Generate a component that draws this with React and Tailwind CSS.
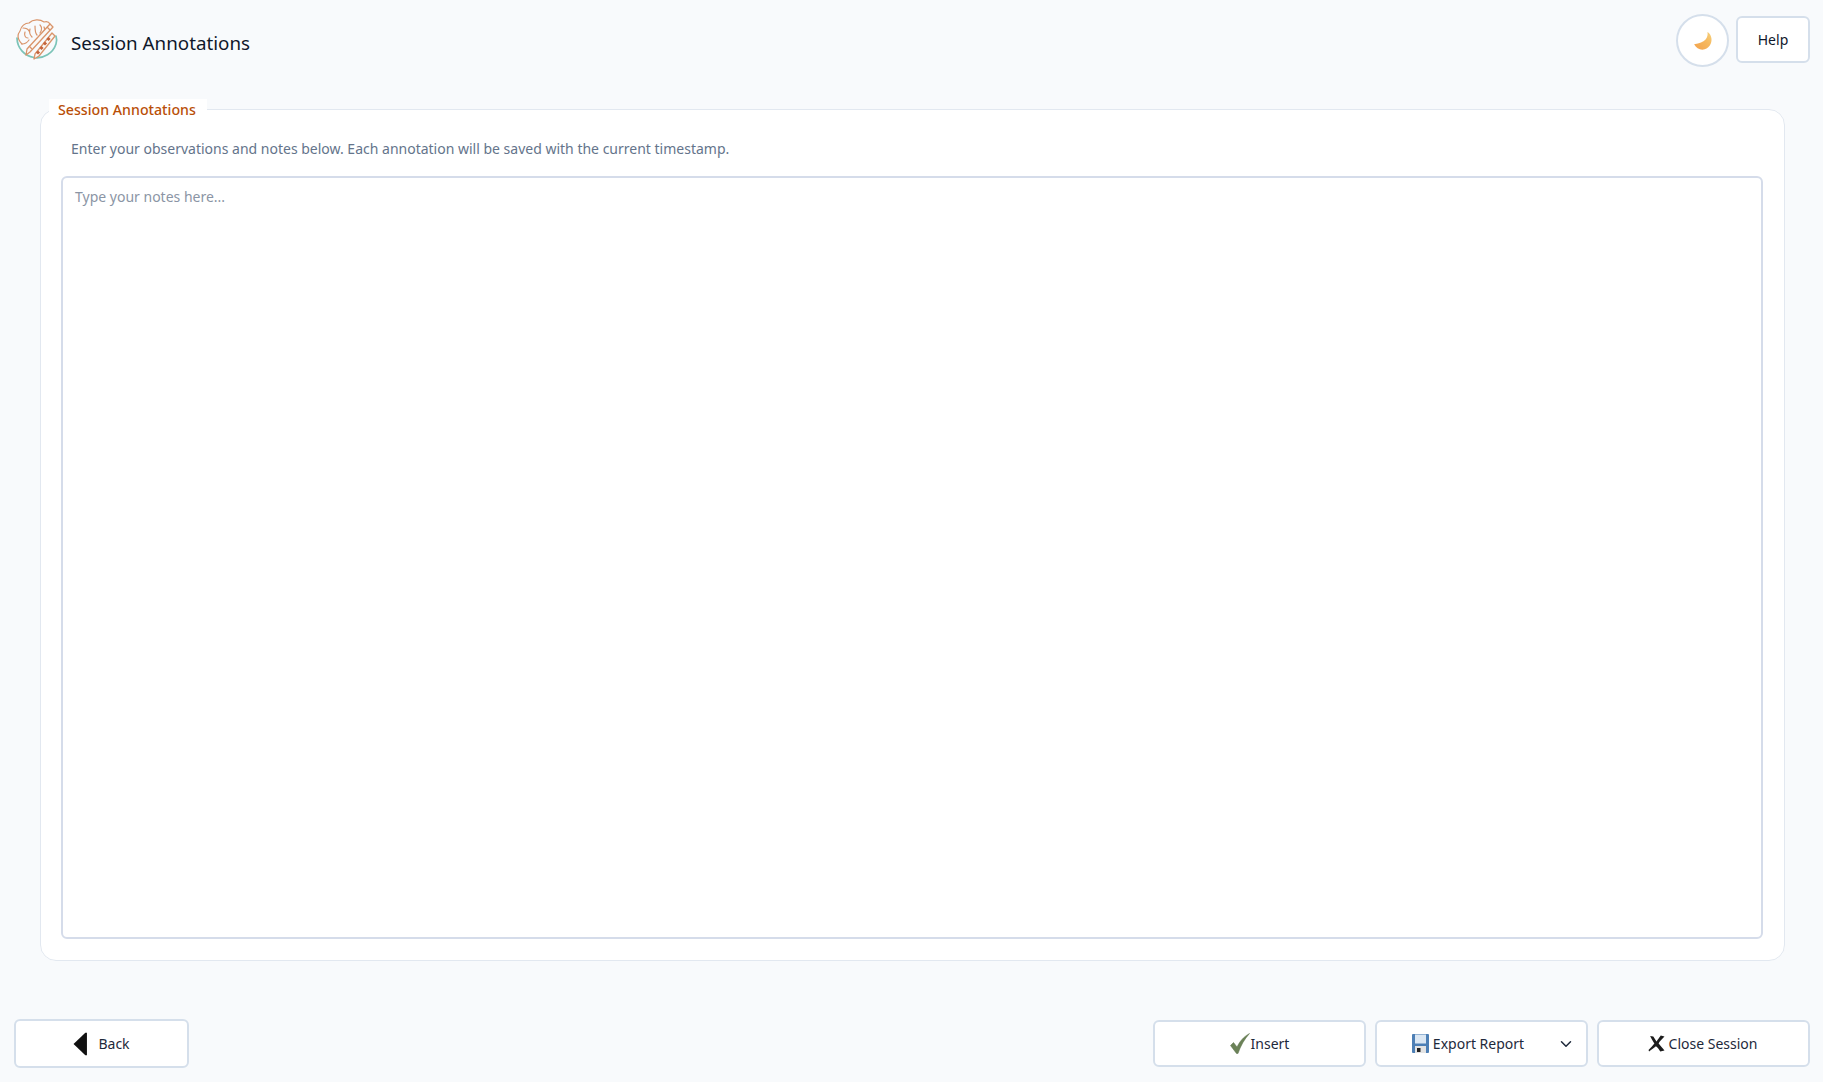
import React from "react";
import { ChevronDown } from "lucide-react";

function Logo() {
  return (
    <svg width="44" height="46" viewBox="0 0 44 46" fill="none" className="shrink-0">
      <path d="M2 20A20 20 0 0 0 41 26C42 23 42 21 41 18" stroke="#7cc4b8" strokeWidth="1.7" strokeLinecap="round" />
      <g stroke="#d9946a" strokeWidth="1.2" strokeLinecap="round" strokeLinejoin="round">
        <path d="M7 26C3 22 2 17 5 13C6 8 10 5 14 5C18 1 25 1 29 4C32 3 34 4 35 6" />
        <path d="M7 26C9 26 12 25 14 22M10 14C9 17 10 20 13 20M15 11C14 14 15 17 17 19M20 8C20 12 20 15 22 17M25 7C27 9 27 12 25 15M8 10C11 10 13 11 14 13M29 9C30 11 30 12 29 13" />
      </g>
      <g stroke="#d9946a" strokeWidth="1.3" strokeLinejoin="round">
        <path d="M35 6L38 9L15 34L11 37L12 31Z" fill="#faf8f6" />
        <path d="M32 9L35 12M14 28L17 31" />
        <path d="M37 15L40 18L24 38L19 41L20 36Z" fill="#faf8f6" />
      </g>
      <g fill="#c4623a">
        <rect x="32" y="19.500" width="3" height="3" transform="rotate(45 33.500 21)" />
        <rect x="28.500" y="24" width="3" height="3" transform="rotate(45 30 25.500)" />
        <rect x="25" y="28.500" width="3" height="3" transform="rotate(45 26.500 30)" />
        <rect x="21.500" y="33" width="3" height="3" transform="rotate(45 23 34.500)" />
      </g>
    </svg>
  );
}

function MoonIcon() {
  return (
    <svg width="20" height="20" viewBox="0 0 18 18">
      <defs>
        <linearGradient id="moonFill" x1="0" y1="1" x2="1" y2="0">
          <stop offset="0" stopColor="#f2a24e" />
          <stop offset="0.6" stopColor="#f6b95f" />
          <stop offset="1" stopColor="#f5d27f" />
        </linearGradient>
      </defs>
      <path d="M13 1C14 6 11 11 1 12C3 16 7 17.500 10.500 16.500C15.500 15 18 9 16 4.500C15.500 3 14.500 2 13 1Z" fill="url(#moonFill)" />
    </svg>
  );
}

function CheckIcon() {
  return (
    <svg width="20" height="21" viewBox="0 0 20 21" className="shrink-0">
      <path d="M0.500 12.500L3.500 9.500L7 14C9.500 9 13 4 19.500 0.500C14.500 6 10.500 13 8 20.500H6.500Z" fill="#6b8257" stroke="#5a7048" strokeWidth="0.5" />
    </svg>
  );
}

function SaveIcon() {
  return (
    <svg width="17" height="19" viewBox="0 0 17 19" className="shrink-0">
      <rect x="0" y="0" width="17" height="19" rx="1" fill="#4d7fb5" />
      <rect x="3" y="0.500" width="11" height="9" fill="#dbe7f3" />
      <rect x="3" y="12" width="11" height="7" fill="#e3e3e3" />
      <rect x="5" y="14" width="3.500" height="4" fill="#222222" />
    </svg>
  );
}

function CloseIcon() {
  return (
    <svg width="17" height="17" viewBox="0 0 16 16" className="shrink-0">
      <path d="M12 0.500L15.500 1.500C13 4 11 6 10 8C11.500 10 13.500 12 15.500 14.500L11.500 15.500C10.500 13.500 9 11.500 7.500 10.500C5.500 12 3.500 13.500 1 15.500L0.500 14C2.500 12 4.500 10 6 8C4.500 6 3.500 4 2 1L5 1.500C6 3 7 4.500 8 6C9.500 4 11 2 12 0.500Z" fill="#1c1c1c" />
    </svg>
  );
}

function FooterButton({ children, className = "" }) {
  return (
    <button className={`h-[47px] w-[213px] flex items-center justify-center bg-white border-2 border-[#d5dfeb] rounded-md text-[14px] text-[#1e293b] ${className}`}>
      {children}
    </button>
  );
}

export default function App() {
  return (
    <div className="h-[1082px] flex flex-col bg-[#f8fafc] font-['Noto_Sans','Open_Sans',sans-serif] overflow-hidden">
      <header className="h-[99px] flex justify-between pl-[15px] pr-[13px]">
        <div className="flex items-start gap-[12px] pt-[18px]">
          <Logo />
          <h1 className="mt-[2px] text-[18.800px] leading-[46px] text-[#0f172a]">Session Annotations</h1>
        </div>
        <div className="flex items-start gap-[7px] pt-[14px]">
          <button className="w-[53px] h-[53px] flex items-center justify-center bg-white border-2 border-[#d5dfeb] rounded-full">
            <MoonIcon />
          </button>
          <button className="mt-[2px] w-[74px] h-[47px] bg-white border-2 border-[#d5dfeb] rounded-md text-sm text-[#0f172a]">Help</button>
        </div>
      </header>

      <fieldset className="ml-[40px] mr-[38px] h-[862px] bg-white border border-[#e2e8f0] rounded-2xl pl-[20px] pr-[21px]">
        <legend className="-ml-[12px] pl-[9px] pr-[11px] h-[20px] leading-[22px] bg-white text-[14.200px] font-medium text-[#b94f08]">Session Annotations</legend>
        <p className="mt-[20px] ml-[10px] text-[14px] leading-[20px] text-[#64748b]">
          Enter your observations and notes below. Each annotation will be saved with the current timestamp.
        </p>
        <textarea
          placeholder="Type your notes here..."
          className="block mt-[17px] h-[763px] w-full resize-none bg-white border-2 border-[#d5dcea] rounded-md px-[12px] py-[9px] text-[14px] leading-[20px] outline-none placeholder:text-[#8b95a5]"
        />
      </fieldset>

      <footer className="mt-[58px] flex items-center pl-[14px] pr-[13px]">
        <button className="h-[49px] w-[175px] flex items-center justify-center gap-[10px] bg-white border-2 border-[#d5dfeb] rounded-md text-[14px] text-[#1e293b]">
          <svg width="15" height="24" viewBox="0 0 14 22" className="shrink-0">
            <path d="M13 0.500V21.500L11.500 21.500L0.500 11L11.500 0.500Z" fill="#111111" />
          </svg>
          Back
        </button>
        <div className="ml-auto flex gap-[9px]">
          <FooterButton className="gap-[1px]">
            <CheckIcon />
            Insert
          </FooterButton>
          <FooterButton className="relative gap-[4px] pr-[27px]">
            <SaveIcon />
            Export Report
            <ChevronDown className="absolute right-[11px] w-[18px] h-[18px] text-[#1e293b]" />
          </FooterButton>
          <FooterButton className="gap-[4px] pr-[2px]">
            <CloseIcon />
            Close Session
          </FooterButton>
        </div>
      </footer>
    </div>
  );
}
